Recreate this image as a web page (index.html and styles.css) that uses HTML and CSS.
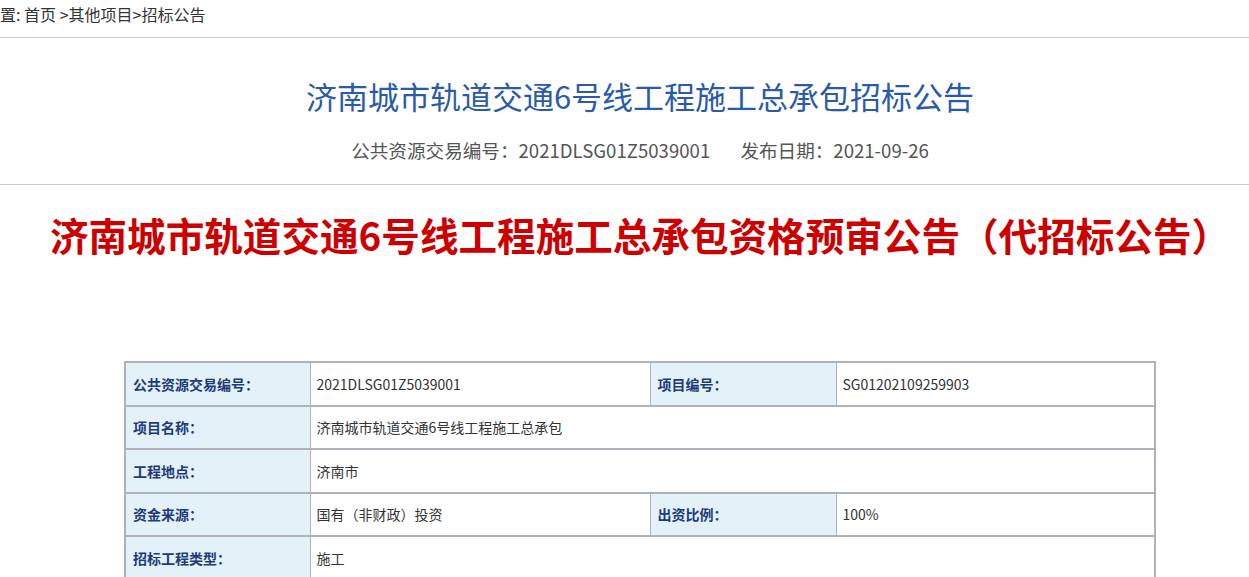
FILE: index.html
```html
<!DOCTYPE html>
<html lang="zh-CN">
<head>
  <meta charset="UTF-8">
  <meta name="viewport" content="width=device-width, initial-scale=1.0">
  <title>济南城市轨道交通6号线工程施工总承包招标公告</title>
  <link rel="stylesheet" href="styles.css">
</head>
<body>
  <div class="page">
    <div class="crumb">
      <span class="crumb-text">置: <a>首页</a> &gt;<a>其他项目</a>&gt;<a>招标公告</a></span>
    </div>

    <div class="head">
      <h1 class="title">济南城市轨道交通6号线工程施工总承包招标公告</h1>
      <p class="meta">
        <span>公共资源交易编号：2021DLSG01Z5039001</span>
        <span class="date">发布日期：2021-09-26</span>
      </p>
    </div>

    <div class="article">
      <h2 class="notice-title">济南城市轨道交通6号线工程施工总承包资格预审公告（代招标公告）</h2>

      <table class="info">
        <colgroup>
          <col class="c1">
          <col class="c2">
          <col class="c3">
          <col class="c4">
        </colgroup>
        <tbody>
          <tr>
            <td class="label">公共资源交易编号：</td>
            <td>2021DLSG01Z5039001</td>
            <td class="label">项目编号：</td>
            <td>SG01202109259903</td>
          </tr>
          <tr>
            <td class="label">项目名称：</td>
            <td colspan="3">济南城市轨道交通6号线工程施工总承包</td>
          </tr>
          <tr>
            <td class="label">工程地点：</td>
            <td colspan="3">济南市</td>
          </tr>
          <tr>
            <td class="label">资金来源：</td>
            <td>国有（非财政）投资</td>
            <td class="label">出资比例：</td>
            <td>100%</td>
          </tr>
          <tr>
            <td class="label">招标工程类型：</td>
            <td colspan="3">施工</td>
          </tr>
        </tbody>
      </table>
    </div>
  </div>
</body>
</html>
```

FILE: styles.css
```css
* {
  box-sizing: border-box;
}
html, body {
  overflow-x: hidden;
}
body {
  margin: 0;
  padding: 0;
  background-color: #fff;
  color: #333;
  font-family: "Noto Sans CJK SC", "Noto Sans", sans-serif;
}
.page {
  width: 1280px;
}
.crumb {
  height: 38px;
  border-bottom: 1px solid #c6ccd8;
  white-space: nowrap;
  overflow: hidden;
}
.crumb-text {
  display: block;
  font-size: 16px;
  line-height: 28px;
  color: #333;
}
.crumb a {
  color: #333;
  text-decoration: none;
  cursor: pointer;
}
.head {
  padding: 38px 0 22px;
  border-bottom: 1px solid #c6ccd8;
  text-align: center;
}
.title {
  margin: 0;
  font-size: 31px;
  line-height: 40px;
  font-weight: normal;
  color: #2a5ba8;
}
.meta {
  margin: 22px 0 0;
  font-size: 18.6px;
  line-height: 24px;
  color: #555;
}
.meta .date {
  margin-left: 26px;
}
.article {
  padding-top: 24px;
}
.notice-title {
  margin: 0 0 102px;
  text-align: center;
  font-size: 38.6px;
  line-height: 50px;
  font-weight: bold;
  color: #cc0000;
  white-space: nowrap;
}
.info {
  width: 1030px;
  margin: 0 auto 40px;
  border-collapse: collapse;
  border: 2px solid #aeb3b9;
  table-layout: fixed;
}
.c1 { width: 185px; }
.c2 { width: 340px; }
.c3 { width: 186px; }
.c4 { width: 319px; }
.info td {
  height: 43.5px;
  padding: 0 6px;
  border-top: 2px solid #aeb3b9;
  border-left: 1px solid #aeb3b9;
  border-right: 1px solid #aeb3b9;
  font-size: 14px;
  color: #333;
  vertical-align: middle;
}
.info td.label {
  background-color: #e3f1f8;
  color: #1e3a78;
  font-weight: bold;
  padding-left: 7px;
}
```
